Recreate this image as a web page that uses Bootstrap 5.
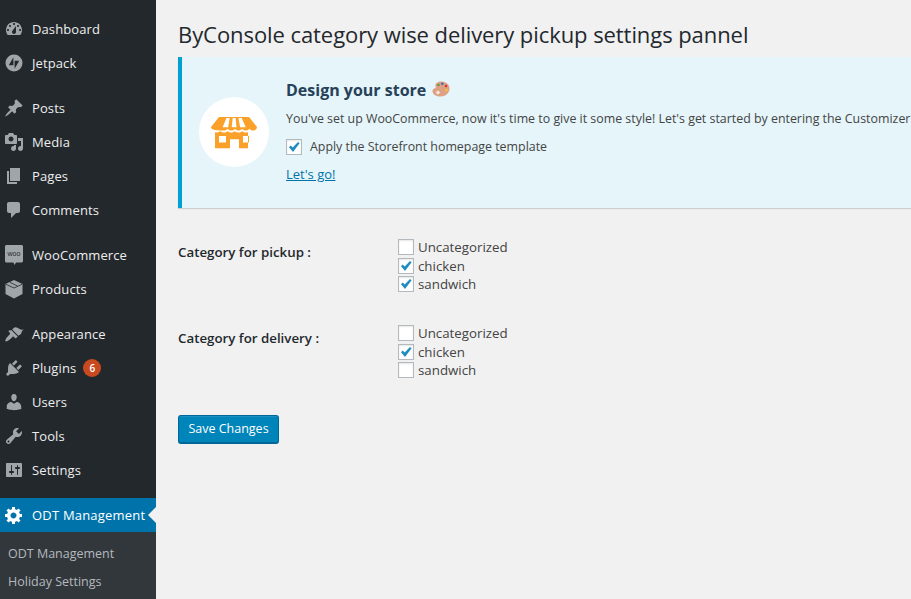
<!DOCTYPE html>
<html lang="en">
<head>
<meta charset="utf-8">
<title>ByConsole settings</title>
<link href="https://cdn.jsdelivr.net/npm/bootstrap@5.3.0/dist/css/bootstrap.min.css" rel="stylesheet">
<style>
html,body{height:100%}
body{background:#f1f1f1;color:#444;font-family:"Open Sans","Noto Sans",sans-serif;font-size:13px;overflow:hidden}
.wp-shell{width:911px;height:599px;overflow:hidden}
.wp-side{width:156px;flex:none;background:#23282d;padding-top:12px;height:599px;overflow:hidden}
.wp-item{height:34px;padding-left:4px;padding-top:2px;color:#eee;font-size:13px;letter-spacing:.1px;text-decoration:none;position:relative}
.wp-item svg{width:20px;height:20px;fill:#a0a5aa;flex:none;margin-right:8px;margin-bottom:2px}
.wp-gap{margin-top:11px}
.wp-current{background:#0073aa;color:#fff;letter-spacing:.2px}
.wp-current svg{fill:#fff}
.wp-current::after{content:"";position:absolute;right:0;top:9px;border:8px solid transparent;border-right-color:#f1f1f1;border-left:0}
.wp-sub{background:#32373c;padding-top:8px;height:70px}
.wp-sub a{display:block;height:28px;line-height:28px;padding-left:8px;color:#b4b9be;font-size:12.5px;text-decoration:none}
.wp-count{width:18px;height:18px;border-radius:50%;background:#ca4a1f;color:#fff;font-size:10px;font-weight:600;margin-left:7px;margin-bottom:2px}
.wp-main{padding-left:22px;min-width:0;flex:1 1 auto}
.wp-title{font-size:22px;font-weight:400;line-height:30px;color:#23282d;margin:19px 0 8px;letter-spacing:-.07px;white-space:nowrap}
.wp-notice{background:#e5f5fa;border-left:4px solid #00a0d2;box-shadow:0 1px 1px rgba(0,0,0,.15);height:151px;white-space:nowrap;overflow:hidden}
.wp-disc{width:70px;height:70px;background:#fff;border-radius:50%;flex:none;margin:40px 17px 0 17px}
.wp-disc svg{width:46px;height:46px}
.wp-notice-body{padding-top:20px}
.wp-notice-title{font-size:16px;font-weight:700;color:#264158;line-height:26px;margin:0 0 6px}
.wp-notice-title svg{width:18px;height:18px;vertical-align:-2px;margin-left:2px}
.wp-notice-text{line-height:20px;margin:0 0 8px;color:#444;font-size:12.4px}
.wp-notice-check{line-height:20px;margin-bottom:7px;font-size:12.4px}
.wp-link{color:#0073aa;line-height:20px}
.form-check-input.wp-box{width:16px;height:16px;margin:0;flex:none;background-color:#fff;border:1px solid #b4b9be;border-radius:0;box-shadow:inset 0 1px 2px rgba(0,0,0,.1)}
.form-check-input.wp-box:checked{background-color:#fff;border-color:#b4b9be;background-size:16px 16px;background-image:url("data:image/svg+xml,%3Csvg xmlns='http://www.w3.org/2000/svg' viewBox='0 0 16 16'%3E%3Cpath fill='%231e8cbe' d='M3 8.2l1.7-1.7 2 2L12 3l1.6 1.3-6.6 8.600z'/%3E%3C/svg%3E")}
.wp-form{margin-top:30px}
.wp-row{margin-bottom:30.5px}
.wp-label{width:220px;flex:none;font-weight:600;color:#23282d;font-size:13.3px;line-height:20px;padding-top:4px}
.wp-opt{height:18.5px;line-height:18px;color:#444;font-size:13.3px}
.wp-opt .wp-box{margin-right:4px}
.btn.wp-save{background:#0085ba;border:1px solid #006799;border-bottom-width:2px;color:#fff;font-size:12.5px;border-radius:3px;width:101px;height:29px;padding:1px 0 0;margin-top:5px;box-shadow:inset 0 1px 0 rgba(255,255,255,.1)}
</style>
</head>
<body>
<div class="wp-shell d-flex">
  <nav class="wp-side">
    <a class="wp-item d-flex align-items-center" href="#"><svg viewBox="0 0 20 20"><path d="M3.76 16h12.48c1.1-1.37 1.76-3.11 1.76-5 0-4.42-3.58-8-8-8s-8 3.58-8 8c0 1.89.66 3.63 1.76 5zM10 4c.55 0 1 .45 1 1s-.45 1-1 1-1-.45-1-1 .45-1 1-1zM6 6c.55 0 1 .45 1 1s-.45 1-1 1-1-.45-1-1 .45-1 1-1zm8 0c.55 0 1 .45 1 1s-.45 1-1 1-1-.45-1-1 .45-1 1-1zm-5.37 5.55L12 7v6c0 1.1-.9 2-2 2s-2-.9-2-2c0-.57.24-1.08.63-1.45zM4 10c.55 0 1 .45 1 1s-.45 1-1 1-1-.45-1-1 .45-1 1-1zm12 0c.55 0 1 .45 1 1s-.45 1-1 1-1-.45-1-1 .45-1 1-1z" fill-rule="evenodd"/></svg>Dashboard</a>
    <a class="wp-item d-flex align-items-center" href="#"><svg viewBox="0 0 20 20"><path fill-rule="evenodd" d="M10 1.500a8.500 8.500 0 1 1 0 17 8.500 8.500 0 0 1 0-17zM9.400 4.200L4.800 12.200h4.600zM10.600 7.800v8l4.600-8z"/></svg>Jetpack</a>
    <a class="wp-item wp-gap d-flex align-items-center" href="#"><svg viewBox="0 0 20 20"><path d="M10.44 3.02l1.82-1.82 6.36 6.35-1.83 1.82c-1.05-.68-2.48-.57-3.41.36l-.75.75c-.92.93-1.04 2.35-.35 3.41l-1.83 1.82-2.41-2.41-2.8 2.79c-.42.42-3.38 2.71-3.8 2.29s1.86-3.39 2.28-3.81l2.79-2.79L4.1 9.36l1.83-1.82c1.05.69 2.48.57 3.41-.36l.75-.75c.93-.92 1.05-2.35.35-3.41z"/></svg>Posts</a>
    <a class="wp-item d-flex align-items-center" href="#"><svg viewBox="0 0 20 20"><path d="M13 11V4c0-.55-.45-1-1-1h-1.67L9 1H5L3.67 3H2c-.55 0-1 .45-1 1v7c0 .55.45 1 1 1h10c.55 0 1-.45 1-1zM7 4.5c1.38 0 2.5 1.12 2.5 2.5S8.38 9.5 7 9.5 4.5 8.38 4.5 7 5.62 4.5 7 4.5zM14 6h5v10.5c0 1.38-1.12 2.5-2.5 2.5S14 17.88 14 16.5s1.12-2.5 2.5-2.5c.17 0 .34.02.5.05V9h-3V6zm-4 8.05V13h2v3.5c0 1.38-1.12 2.5-2.5 2.5S7 17.88 7 16.5 8.12 14 9.5 14c.17 0 .34.02.5.05z"/></svg>Media</a>
    <a class="wp-item d-flex align-items-center" href="#"><svg viewBox="0 0 20 20"><path d="M6 15V2h10v13H6zm-1 1h8v2H3V5h2v11z"/></svg>Pages</a>
    <a class="wp-item d-flex align-items-center" href="#"><svg viewBox="0 0 20 20"><path d="M5 2h9c1.1 0 2 .9 2 2v7c0 1.1-.9 2-2 2h-2l-5 5v-5H5c-1.1 0-2-.9-2-2V4c0-1.1.9-2 2-2z"/></svg>Comments</a>
    <a class="wp-item wp-gap d-flex align-items-center" href="#"><svg viewBox="0 0 20 20"><path d="M2.500 0h15c.8 0 1.500.7 1.500 1.500v14.500c0 .8-.7 1.500-1.500 1.500H12l-1.500 2.500-1-2.500H2.500c-.8 0-1.500-.7-1.500-1.500V1.500C1 .7 1.700 0 2.500 0z"/><text x="10" y="11" text-anchor="middle" font-family="Liberation Sans,sans-serif" font-size="7" style="fill:#23282d">woo</text></svg>WooCommerce</a>
    <a class="wp-item d-flex align-items-center" href="#"><svg viewBox="0 0 20 20"><path d="M10 1l8.500 4v10L10 19.500 1.500 15V5z"/><path d="M2 5.300L10 9l8-3.700M6 3.400l7.500 3.600" fill="none" stroke="#23282d" stroke-width=".8"/></svg>Products</a>
    <a class="wp-item wp-gap d-flex align-items-center" href="#"><svg viewBox="0 0 20 20"><path d="M14.400 11.800L8.200 5.600 10 3.800c.8-.8 2.200-.7 3.400 0 1.300.7 2 1.300 3.300 1.700 1 .3 2 .3 3 .1-.7.700-1.300 1-1.800 1.800-.5.800-.3 1.600-.8 2.300-.7.900-1.700 1-2.700 2.100zM7.500 6.300l6.200 6.200-1.400 1.400c-.4.400-1 .4-1.400 0l-1-1c-.4-.4-1-.4-1.400 0-.8.8-1.900 1.900-3 2.800-1.300 1-3.600 2.100-4.100 1.600s.6-2.800 1.600-4.100c.9-1.100 2-2.200 2.800-3 .4-.4.4-1 0-1.400l-1-1c-.4-.4-.4-1 0-1.400z"/></svg>Appearance</a>
    <a class="wp-item d-flex align-items-center" href="#"><svg viewBox="0 0 20 20"><path d="M13.110 4.360L9.870 7.600 8 5.730l3.240-3.240c.35-.34 1.050-.2 1.560.32.52.51.66 1.210.31 1.550zm-8 1.770l.91-1.120 9.010 9.010-1.190.84c-.71.71-2.630 1.160-3.820 1.160H6.140L4.900 17.260c-.59.59-1.540.59-2.120 0-.59-.58-.59-1.530 0-2.120l1.240-1.240v-3.880c0-1.130.4-3.190 1.090-3.890zm7.260 3.970l3.240-3.240c.34-.35 1.040-.21 1.550.31.52.51.66 1.210.31 1.550l-3.240 3.250z"/></svg>Plugins<span class="wp-count d-inline-flex align-items-center justify-content-center">6</span></a>
    <a class="wp-item d-flex align-items-center" href="#"><svg viewBox="0 0 20 20"><path d="M10 9.250c-2.270 0-2.730-3.440-2.730-3.440C7 4.020 7.820 2 9.970 2c2.160 0 2.980 2.020 2.710 3.810 0 0-.41 3.440-2.680 3.440zm0 2.570L12.720 10c2.390 0 4.520 2.330 4.520 4.530v2.490s-3.650 1.130-7.240 1.130c-3.650 0-7.240-1.130-7.240-1.130v-2.490c0-2.250 1.940-4.480 4.470-4.480z"/></svg>Users</a>
    <a class="wp-item d-flex align-items-center" href="#"><svg viewBox="0 0 20 20"><path fill-rule="evenodd" d="M16.680 9.770c-1.340 1.340-3.300 1.670-4.950.99l-5.410 6.520c-.99.99-2.590.99-3.580 0s-.99-2.590 0-3.570l6.520-5.420c-.68-1.650-.35-3.610.99-4.950 1.280-1.280 3.120-1.620 4.720-1.060l-2.890 2.890 2.820 2.820 2.860-2.870c.53 1.580.18 3.390-1.080 4.650zM3.810 16.210c.4.39 1.040.39 1.430 0 .4-.4.4-1.040 0-1.430-.39-.4-1.030-.4-1.430 0-.39.39-.39 1.030 0 1.430z"/></svg>Tools</a>
    <a class="wp-item d-flex align-items-center" href="#"><svg viewBox="0 0 20 20"><path fill-rule="evenodd" d="M18 16V4c0-.55-.45-1-1-1H3c-.55 0-1 .45-1 1v12c0 .55.45 1 1 1h14c.55 0 1-.45 1-1zM8 11h1c.55 0 1 .45 1 1s-.45 1-1 1H8v1.500c0 .28-.22.5-.5.5s-.5-.22-.5-.5V13H6c-.55 0-1-.45-1-1s.45-1 1-1h1V5.500c0-.28.22-.5.5-.5s.5.22.5.5V11zm5-2h-1c-.55 0-1-.45-1-1s.45-1 1-1h1V5.500c0-.28.22-.5.5-.5s.5.22.5.5V7h1c.55 0 1 .45 1 1s-.45 1-1 1h-1v5.500c0 .28-.22.5-.5.5s-.5-.22-.5-.5V9z"/></svg>Settings</a>
    <a class="wp-item wp-gap wp-current d-flex align-items-center" href="#"><svg viewBox="0 0 20 20"><path fill-rule="evenodd" d="M18 12h-2.180c-.17.7-.44 1.350-.81 1.930l1.540 1.540-2.100 2.100-1.540-1.540c-.58.36-1.230.63-1.910.79V19H8v-2.180c-.68-.16-1.330-.43-1.910-.79l-1.540 1.540-2.120-2.120 1.540-1.540c-.36-.58-.63-1.230-.79-1.910H1V9.030h2.170c.16-.7.44-1.350.8-1.940L2.430 5.550l2.100-2.100 1.540 1.540c.58-.37 1.240-.64 1.930-.81V2h3v2.180c.68.16 1.330.43 1.910.79l1.540-1.540 2.120 2.120-1.540 1.540c.36.59.64 1.240.8 1.940H18V12zm-8.500 1.500c1.660 0 3-1.340 3-3s-1.340-3-3-3-3 1.340-3 3 1.340 3 3 3z"/></svg>ODT Management</a>
    <div class="wp-sub">
      <a href="#">ODT Management</a>
      <a href="#">Holiday Settings</a>
    </div>
  </nav>
  <main class="wp-main">
    <h1 class="wp-title">ByConsole category wise delivery pickup settings pannel</h1>
    <div class="wp-notice d-flex">
      <div class="wp-disc d-flex align-items-center justify-content-center">
        <svg viewBox="0 0 46 46"><path fill="#fba12a" d="M8 8h30l8 10c0 2.300-1.800 3.500-3.800 3.500-1.800 0-3-.9-3.700-1.800-.8 1-2 1.800-3.700 1.800s-3-.8-3.800-1.800c-.8 1-2 1.800-3.500 1.800s-2.800-.8-3.500-1.800c-.8 1-2 1.800-3.700 1.800s-3-.8-3.700-1.800c-.8 1-2 1.800-3.800 1.800C1.900 21.500 0 20.300 0 18z"/><path fill="#fff" d="M15.500 9h3.200l-1.500 9.200h-5.600zM21.700 9h2.900l.9 9.200h-4.800zM27.500 9h3.200l4 9.200h-5.600z"/><path fill="#fba12a" fill-rule="evenodd" d="M4 23.200c2.200.5 3.900.2 5.300-.9 1.200.9 2.400 1.200 3.700 1.200s2.700-.3 3.700-1.200c1 .9 2.300 1.200 3.500 1.200s2.500-.3 3.500-1.200c1 .9 2.300 1.200 3.800 1.200 1.300 0 2.600-.3 3.700-1.200 1 .9 2.200 1.200 3.500 1.200.8 0 1.500-.1 2.300-.3v16H28v-9h-9v9H4zM8 27v6.500h7V27zM32 27v6.500h6V27z"/></svg>
      </div>
      <div class="wp-notice-body">
        <h2 class="wp-notice-title">Design your store <svg viewBox="0 0 18 18"><path fill="#dfa184" d="M9 1.500c5 0 8.500 3 8.500 7 0 4.500-4 8-9 8C3.500 16.500.5 14 .5 11c0-2 1.500-2.500 2.500-2.800C4 7.900 4 7 3.500 6.200 2.900 4 5 1.500 9 1.500z"/><circle cx="6.500" cy="5" r="1.300" fill="#5a9e4c"/><circle cx="10.300" cy="3.800" r="1.300" fill="#3c6fb4"/><circle cx="14" cy="6" r="1.300" fill="#d9342b"/><circle cx="14.500" cy="10" r="1.300" fill="#f2c230"/><circle cx="6" cy="12.500" r="1.700" fill="#f6ece6"/></svg></h2>
        <p class="wp-notice-text">You've set up WooCommerce, now it's time to give it some style! Let's get started by entering the Customizer</p>
        <div class="wp-notice-check d-flex align-items-center gap-2"><input class="form-check-input wp-box" type="checkbox" checked aria-label="Apply template"><span>Apply the Storefront homepage template</span></div>
        <a class="wp-link" href="#">Let's go!</a>
      </div>
    </div>
    <form class="wp-form">
      <div class="wp-row d-flex">
        <div class="wp-label">Category for pickup :</div>
        <div>
          <label class="wp-opt d-flex align-items-center"><input class="form-check-input wp-box" type="checkbox">Uncategorized</label>
          <label class="wp-opt d-flex align-items-center"><input class="form-check-input wp-box" type="checkbox" checked>chicken</label>
          <label class="wp-opt d-flex align-items-center"><input class="form-check-input wp-box" type="checkbox" checked>sandwich</label>
        </div>
      </div>
      <div class="wp-row d-flex">
        <div class="wp-label">Category for delivery :</div>
        <div>
          <label class="wp-opt d-flex align-items-center"><input class="form-check-input wp-box" type="checkbox">Uncategorized</label>
          <label class="wp-opt d-flex align-items-center"><input class="form-check-input wp-box" type="checkbox" checked>chicken</label>
          <label class="wp-opt d-flex align-items-center"><input class="form-check-input wp-box" type="checkbox">sandwich</label>
        </div>
      </div>
      <button type="button" class="btn wp-save">Save Changes</button>
    </form>
  </main>
</div>
</body>
</html>
